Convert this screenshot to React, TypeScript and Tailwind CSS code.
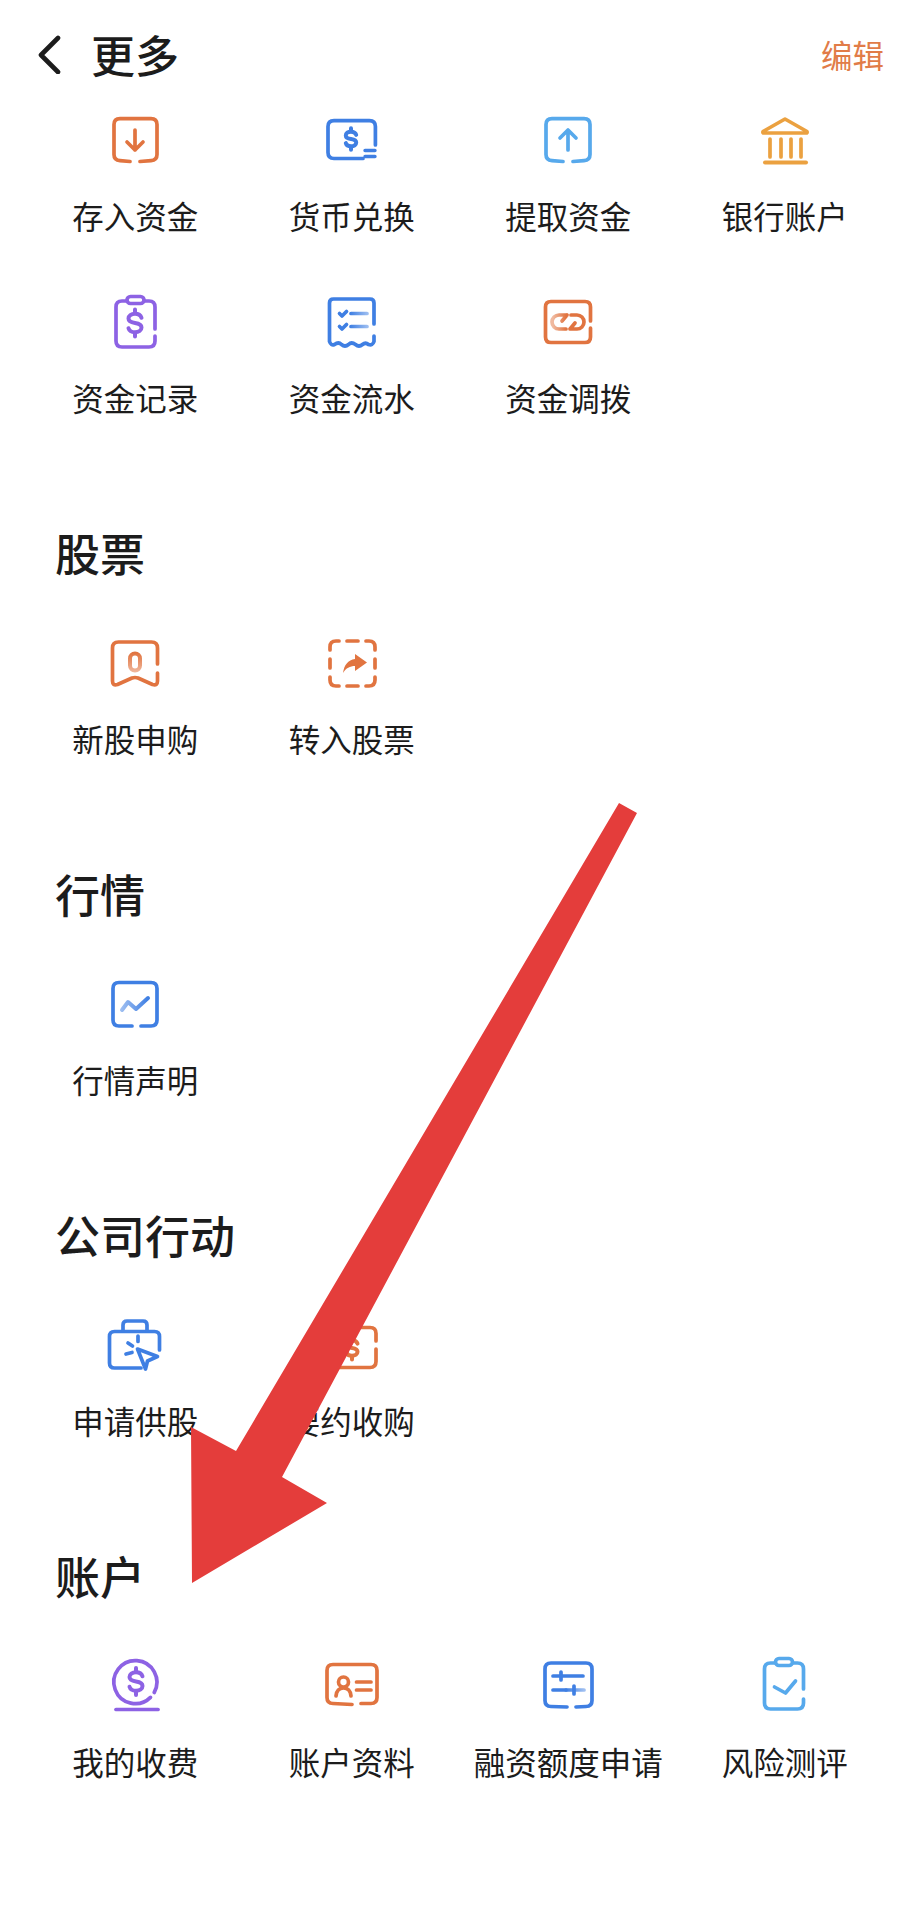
import type { ReactNode } from "react";

const ORANGE = "#E17440";
const BLUE = "#3F7FE3";
const SKY = "#57A9EC";
const GOLD = "#EBA140";
const PURPLE = "#8D62E4";

const Icon = ({ color, children }: { color: string; children: ReactNode }) => (
  <svg
    width="56"
    height="56"
    viewBox="0 0 56 56"
    fill="none"
    stroke={color}
    strokeWidth="3.7"
    strokeLinecap="round"
    strokeLinejoin="round"
    className="overflow-visible"
  >
    {children}
  </svg>
);

// 金額記号 (cx, cy が中心)
const Dollar = ({ cx, cy, s = 1 }: { cx: number; cy: number; s?: number }) => (
  <g transform={`translate(${cx} ${cy}) scale(${s})`} strokeWidth={4 / s}>
    <path d="M6.5-5.2C5.6-8 3.2-9.2 0-9.2c-3.8 0-6.5 2-6.5 4.8 0 3 2.8 3.9 6.5 4.4 3.8.5 6.5 1.5 6.5 4.5 0 2.8-2.7 4.7-6.5 4.7-3.2 0-5.7-1.2-6.5-4" />
    <path d="M0-13.5v3.5M0 10v3.5" />
  </g>
);

// 横線のフェード用グラデーション
const Fade = ({ id, color, x1, x2, y1 = 0, y2 = 0 }: { id: string; color: string; x1: number; x2: number; y1?: number; y2?: number }) => (
  <linearGradient id={id} gradientUnits="userSpaceOnUse" x1={x1} x2={x2} y1={y1} y2={y2}>
    <stop offset="0" stopColor={color} />
    <stop offset="1" stopColor={color} stopOpacity="0.5" />
  </linearGradient>
);

const DepositIcon = () => (
  <Icon color={ORANGE}>
    <path d="M23 49.5 13 48.6q-6-.4-6-6.1V12.6q0-6 6-6h31q6 0 6 6v29.900q0 5.700-6 6.100L33 49.500" />
    <path d="M28 18v20M20 30l8 8 8-8" />
  </Icon>
);

const ExchangeIcon = () => (
  <Icon color={BLUE}>
    <path d="M39 46.5H10q-6 0-6-6V14.600q0-6 6-6h35.400q6 0 6 6V33" />
    <path d="M41 38.5h10M41 44.5h10" strokeWidth="3.4" />
    <Dollar cx={27} cy={27} s={0.8} />
  </Icon>
);

const WithdrawIcon = () => (
  <Icon color={SKY}>
    <path d="M23 49.5 12 48.6q-6-.4-6-6.1V12.600q0-6 6-6h32q6 0 6 6v29.900q0 5.700-6 6.100L33 49.500" />
    <path d="M28 18v20M20 26l8-8 8 8" />
  </Icon>
);

const BankIcon = () => (
  <Icon color={GOLD}>
    <path d="M28 7 6 19.5q-.5 1.500 1 1.500h42q1.500 0 1-1.500z" />
    <path d="M13 27v18M24 27v18M34 27v18M44 27v18" />
    <path d="M8 50.5h41" strokeWidth="4" />
  </Icon>
);

const RecordIcon = () => (
  <Icon color={PURPLE}>
    <path d="M48 35V13q0-6-6-6H15q-6 0-6 6v34q0 6 6 6h27q6 0 6-6v-5" />
    <rect x="20" y="2.5" width="17" height="7" rx="3.5" fill="#fff" />
    <Dollar cx={28} cy={29} s={1} />
  </Icon>
);

const ReceiptIcon = () => (
  <Icon color={BLUE}>
    <defs>
      <Fade id="r1" color={BLUE} x1={26} x2={44} />
    </defs>
    <path d="M50 30V9q0-4-4-4H9.5q-4 0-4 4v38.500q1.500 4.500 5 3 4-3 7 0 3.500 3 7 0 3-3 7 0 3.500 3 7 0 3-2.500 6 0 4 1.500 5.500-3V42" />
    <path d="m15.5 19.5 2.500 2.500 4.500-4.500M15.5 32.5 18 35l4.500-4.500" />
    <path d="M27 19.5h16.010M27 32.5h16.010" stroke="url(#r1)" />
  </Icon>
);

const TransferIcon = () => (
  <Icon color={ORANGE}>
    <defs>
      <Fade id="t1" color={ORANGE} x1={26} x2={13} />
    </defs>
    <path d="M50.5 27V13q0-5.5-5.5-5.5H11Q5.5 7.5 5.500 13v30q0 5.500 5.500 5.500h34q5.500 0 5.500-5.500v-9" />
    <path d="M27 21h-8a7 7 0 0 0 0 14h7M27 21l-5 6" stroke="url(#t1)" />
    <path d="M31 21h6a7 7 0 0 1 0 14h-7l5-6" />
  </Icon>
);

const IpoIcon = () => (
  <Icon color={ORANGE}>
    <defs>
      <Fade id="i1" color={ORANGE} x1={0} x2={0} y1={18} y2={38} />
    </defs>
    <path d="M50.5 29V13q0-6-6-6h-33q-6 0-6 6v33q0 5 5 3.500L25 43q3-1 6 0l14.500 6.500q5 1.500 5-3.500v-8" />
    <rect x="23" y="18.5" width="10.010" height="17" rx="5" stroke="url(#i1)" strokeWidth="4" />
  </Icon>
);

const StockInIcon = () => (
  <Icon color={ORANGE}>
    <path d="M6 15v-3q0-6 6-6h3M23 6h11M42 6h3q6 0 6 6v3M6 24v9M51 24v9M6 42v3q0 6 6 6h3M23 51h11M42 51h3q6 0 6-6v-3" />
    <path d="M19 38c1-8 5-13 12-14v-5l12 8.500-12 8.500v-5c-5 0-9 2-12 7z" fill={ORANGE} stroke="none" />
  </Icon>
);

const QuoteIcon = () => (
  <Icon color={BLUE}>
    <defs>
      <Fade id="q1" color={BLUE} x1={41} x2={14} />
    </defs>
    <path d="M25 50H12q-6 0-6-6V12.500q0-6 6-6h32q6 0 6 6V44q0 6-6 6H34" />
    <path d="m15 34 6-8 8 7 12-11" stroke="url(#q1)" strokeWidth="4" />
  </Icon>
);

const RightsIcon = () => (
  <Icon color={BLUE}>
    <path d="M52.5 33V19.5q0-5-5-5h-40q-5 0-5 5V46q0 5 5 5H34" />
    <path d="M16 14V8q0-4 4-4h16q4 0 4 4v6" />
    <path d="m30.5 32 20 7.500-10 4.500-2 8z" />
    <path d="m21 26 4.500 3M19 37l6-1.500M31 19v5.500" />
  </Icon>
);

const TenderIcon = () => (
  <Icon color={ORANGE}>
    <path d="M36 10.5h10q6 0 6 6V24M52 32v12.500q0 6-6 6H10q-6 0-6-6v-28q0-6 6-6h15" />
    <Dollar cx={28} cy={31} s={0.85} />
  </Icon>
);

const FeeIcon = () => (
  <Icon color={PURPLE}>
    <path d="M47.2 34.5A21.5 21.5 0 1 0 43.5 39.4" />
    <Dollar cx={29} cy={23.5} s={1} />
    <path d="M9 51.5h42" />
  </Icon>
);

const ProfileIcon = () => (
  <Icon color={ORANGE}>
    <path d="M28 46.5 9 45.5q-6 0-6-6V12.500q0-6 6-6h38q6 0 6 6v27q0 6-6 6H37" />
    <circle cx="19.5" cy="24" r="5" />
    <path d="M12 38c.5-5 3-8 7.500-8s7 3 7.500 8" />
    <path d="M32.5 24H47M32.5 32H47" />
  </Icon>
);

const MarginIcon = () => (
  <Icon color={BLUE}>
    <defs>
      <Fade id="m1" color={BLUE} x1={26} x2={44} />
    </defs>
    <path d="M27 49 11 48.5q-6 0-6-6V11q0-6 6-6h35q6 0 6 6v31.500q0 6-6 6L36 49" />
    <path d="M13 18h30M21 14v8" />
    <path d="M13 32h13" />
    <path d="M26 32h18" stroke="url(#m1)" />
    <path d="M34 28v8" />
  </Icon>
);

const RiskIcon = () => (
  <Icon color={SKY}>
    <g transform="translate(-1.5 -2)">
      <path d="M48 33V13q0-6-6-6H15q-6 0-6 6v34q0 6 6 6h27q6 0 6-6v-4" />
      <rect x="20" y="2.5" width="17" height="7" rx="3.5" fill="#fff" />
      <path d="m19 31 11 6 10-12" />
    </g>
  </Icon>
);

type Item = { label: string; icon: ReactNode };

const SECTIONS: { title?: string; items: Item[] }[] = [
  {
    items: [
      { label: "存入资金", icon: <DepositIcon /> },
      { label: "货币兑换", icon: <ExchangeIcon /> },
      { label: "提取资金", icon: <WithdrawIcon /> },
      { label: "银行账户", icon: <BankIcon /> },
      { label: "资金记录", icon: <RecordIcon /> },
      { label: "资金流水", icon: <ReceiptIcon /> },
      { label: "资金调拨", icon: <TransferIcon /> },
    ],
  },
  {
    title: "股票",
    items: [
      { label: "新股申购", icon: <IpoIcon /> },
      { label: "转入股票", icon: <StockInIcon /> },
    ],
  },
  {
    title: "行情",
    items: [{ label: "行情声明", icon: <QuoteIcon /> }],
  },
  {
    title: "公司行动",
    items: [
      { label: "申请供股", icon: <RightsIcon /> },
      { label: "要约收购", icon: <TenderIcon /> },
    ],
  },
  {
    title: "账户",
    items: [
      { label: "我的收费", icon: <FeeIcon /> },
      { label: "账户资料", icon: <ProfileIcon /> },
      { label: "融资额度申请", icon: <MarginIcon /> },
      { label: "风险测评", icon: <RiskIcon /> },
    ],
  },
];

const App = () => {
  return (
    <div className="relative min-h-[1920px] w-[920px] overflow-hidden bg-white font-['Noto_Sans_CJK_SC','Noto_Sans',sans-serif] text-[#1c1c1c]">
      {/* ヘッダー */}
      <div className="flex h-[112px] items-center justify-between pr-[36px] pb-[4px] pl-[36px]">
        <div className="flex items-center gap-[29px]">
          <svg width="26" height="40" viewBox="0 0 26 40" fill="none" stroke="#1c1c1c" strokeWidth="4.6" strokeLinecap="round" strokeLinejoin="round">
            <path d="M22 4 5 21l17 17" />
          </svg>
          <h1 className="text-[44px] leading-[56px] font-medium">更多</h1>
        </div>
        <button className="text-[31.5px] leading-[40px] text-[#E17C48]">编辑</button>
      </div>

      {SECTIONS.map((section, i) => (
        <section key={i} className="mb-[108px]">
          {section.title && (
            <h2 className="mb-[54px] pl-[55px] text-[45px] leading-[56px] font-medium">
              {section.title}
            </h2>
          )}
          <div className="grid grid-cols-4 gap-y-[59px] px-[27px]">
            {section.items.map((item) => (
              <div key={item.label} className="flex flex-col items-center">
                {item.icon}
                <span className="mt-[27px] text-[31.5px] leading-[40px] whitespace-nowrap">
                  {item.label}
                </span>
              </div>
            ))}
          </div>
        </section>
      ))}

      {/* 赤い矢印 (スクリーンショットへの書き込み) */}
      <svg className="pointer-events-none absolute top-0 left-0" width="920" height="1920" viewBox="0 0 920 1920">
        <polygon points="619,803 637,813 282,1477 327,1503 192,1583 191,1427 236,1451" fill="#E43D3B" />
      </svg>
    </div>
  );
};

export default App;
